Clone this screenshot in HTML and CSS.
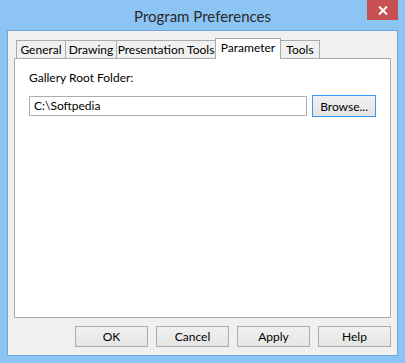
FILE: index.html
```html
<!DOCTYPE html>
<html lang="en">
<head>
    <meta charset="UTF-8">
    <title>Program Preferences</title>
    <link rel="stylesheet" href="styles.css">
</head>
<body>
    <div class="window">
        <div class="titlebar">
            <span class="title">Program Preferences</span>
            <div class="close">
                <svg width="10" height="9" viewBox="0 0 10 9">
                    <path d="M1 0.5 L9 8.5 M9 0.5 L1 8.5" stroke="#fff" stroke-width="2"/>
                </svg>
            </div>
        </div>

        <div class="client">
            <div class="tabs">
                <div class="tab tab-general">General</div>
                <div class="tab tab-drawing">Drawing</div>
                <div class="tab tab-presentation">Presentation Tools</div>
                <div class="tab tab-parameter active">Parameter</div>
                <div class="tab tab-tools">Tools</div>
            </div>

            <div class="panel">
                <div class="field-label">Gallery Root Folder:</div>
                <div class="field-row">
                    <div class="textbox">C:\Softpedia</div>
                    <button class="btn btn-default">Browse...</button>
                </div>
            </div>

            <div class="buttons">
                <button class="btn btn-dialog">OK</button>
                <button class="btn btn-dialog">Cancel</button>
                <button class="btn btn-dialog">Apply</button>
                <button class="btn btn-dialog">Help</button>
            </div>
        </div>
    </div>
</body>
</html>
```

FILE: styles.css
```css
* {
    margin: 0;
    padding: 0;
    box-sizing: border-box;
}

body {
    font-family: Lato, "Open Sans", sans-serif;
    font-size: 12px;
    color: #000;
    background: #8cc4f4;
}

.window {
    width: 405px;
    height: 363px;
    background: #8cc4f4;
    display: flex;
    flex-direction: column;
    position: relative;
}

.titlebar {
    height: 30px;
    display: flex;
    align-items: center;
    justify-content: center;
}

.title {
    font-size: 15px;
    color: #2b2b2b;
    margin-top: 1px;
}

.close {
    position: absolute;
    top: 0;
    left: 367px;
    width: 31px;
    height: 20px;
    background: #c75050;
    display: flex;
    align-items: center;
    justify-content: center;
}

.client {
    margin: 0 7px 7px 7px;
    flex: 1;
    background: #f0f0f0;
    border: 1px solid #6fa8dc;
    padding: 7px 6px 0 6px;
    display: flex;
    flex-direction: column;
}

/* tab strip */
.tabs {
    display: flex;
    align-items: flex-end;
    height: 20px;
    padding-left: 2px;
}

.tab {
    height: 18px;
    border: 1px solid #acacac;
    border-bottom: none;
    background: #f0f0f0;
    margin-left: -1px;
    text-align: center;
    line-height: 18px;
    white-space: nowrap;
}

.tab:first-child {
    margin-left: 0;
}

.tab-general { width: 50px; }
.tab-drawing { width: 52px; }
.tab-presentation { width: 100px; }
.tab-parameter { width: 66px; }
.tab-tools { width: 40px; }

.tab.active {
    height: 21px;
    background: #fff;
    margin-bottom: -1px;
    position: relative;
    z-index: 1;
    line-height: 18px;
}

.panel {
    height: 260px;
    background: #fff;
    border: 1px solid #acacac;
    padding: 11px 14px 0 14px;
}

.field-label {
    height: 16px;
    line-height: 16px;
}

.field-row {
    display: flex;
    align-items: center;
    margin-top: 9px;
}

.textbox {
    width: 279px;
    height: 20px;
    border: 1px solid #abadb3;
    background: #fff;
    padding-left: 4px;
    line-height: 18px;
}

.btn {
    font-family: inherit;
    font-size: inherit;
    color: #000;
    height: 21px;
    border: 1px solid #acacac;
    background: linear-gradient(#f0f0f0, #e5e5e5);
}

.btn-default {
    width: 64px;
    height: 22px;
    margin-left: 5px;
    border-color: #3399ff;
}

.buttons {
    display: flex;
    justify-content: flex-end;
    gap: 8px;
    margin-top: 8px;
}

.btn-dialog {
    width: 73px;
}
```
